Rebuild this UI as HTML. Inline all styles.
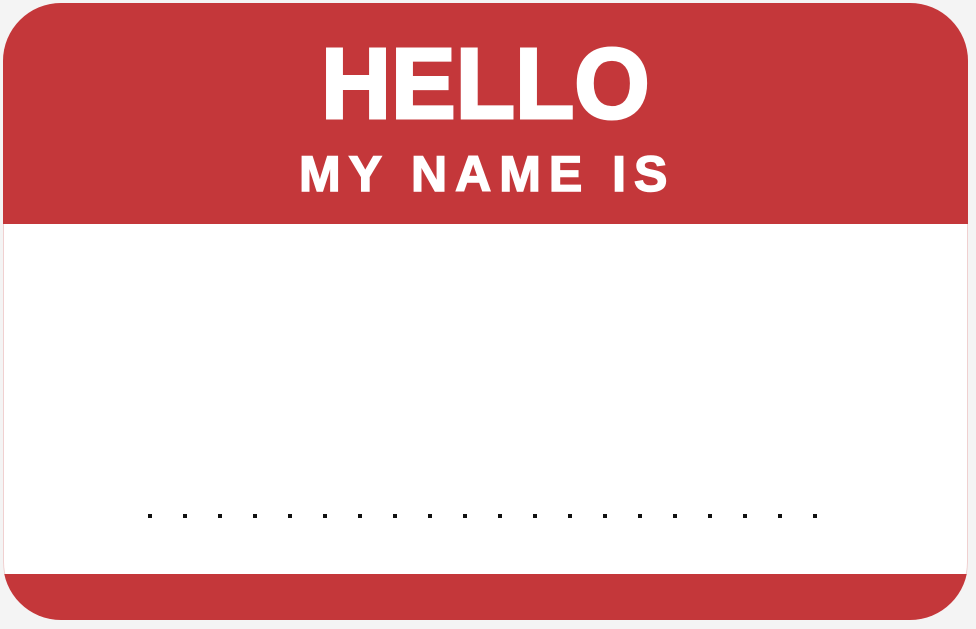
<!DOCTYPE html>
<html><head><style>
html,body{margin:0;padding:0;width:976px;height:629px;background:#f4f4f4;overflow:hidden}
.card{position:absolute;left:3px;top:3px;width:965px;height:617px;border-radius:58px;background:#fff;overflow:hidden;box-shadow:inset 0 0 0 1px #f0d0d0}
.top{position:absolute;left:0;top:0;width:100%;height:221px;background:#c4373a}
.bot{position:absolute;left:0;top:571px;width:100%;height:60px;background:#c4373a}
.t{position:absolute;color:#fff;font-family:"Liberation Sans",sans-serif;font-weight:bold;white-space:nowrap;line-height:1}
.h{left:318px;top:31px;font-size:100px;transform-origin:0 0;transform:scaleX(0.97);-webkit-text-stroke:3px #fff}
.m{left:296px;top:146px;font-size:50px;letter-spacing:8px;-webkit-text-stroke:1.5px #fff}
.d{position:absolute;top:511px;width:4px;height:4px;background:#111}
</style></head><body>
<div class="card">
<div class="top"></div>
<div class="bot"></div>
<div class="t h">HELLO</div>
<div class="t m">MY NAME IS</div>
<div class="d" style="left:145px"></div><div class="d" style="left:180px"></div><div class="d" style="left:215px"></div><div class="d" style="left:250px"></div><div class="d" style="left:285px"></div><div class="d" style="left:320px"></div><div class="d" style="left:355px"></div><div class="d" style="left:390px"></div><div class="d" style="left:425px"></div><div class="d" style="left:460px"></div><div class="d" style="left:495px"></div><div class="d" style="left:530px"></div><div class="d" style="left:565px"></div><div class="d" style="left:600px"></div><div class="d" style="left:635px"></div><div class="d" style="left:670px"></div><div class="d" style="left:705px"></div><div class="d" style="left:740px"></div><div class="d" style="left:775px"></div><div class="d" style="left:810px"></div>
</div>
</body></html>
